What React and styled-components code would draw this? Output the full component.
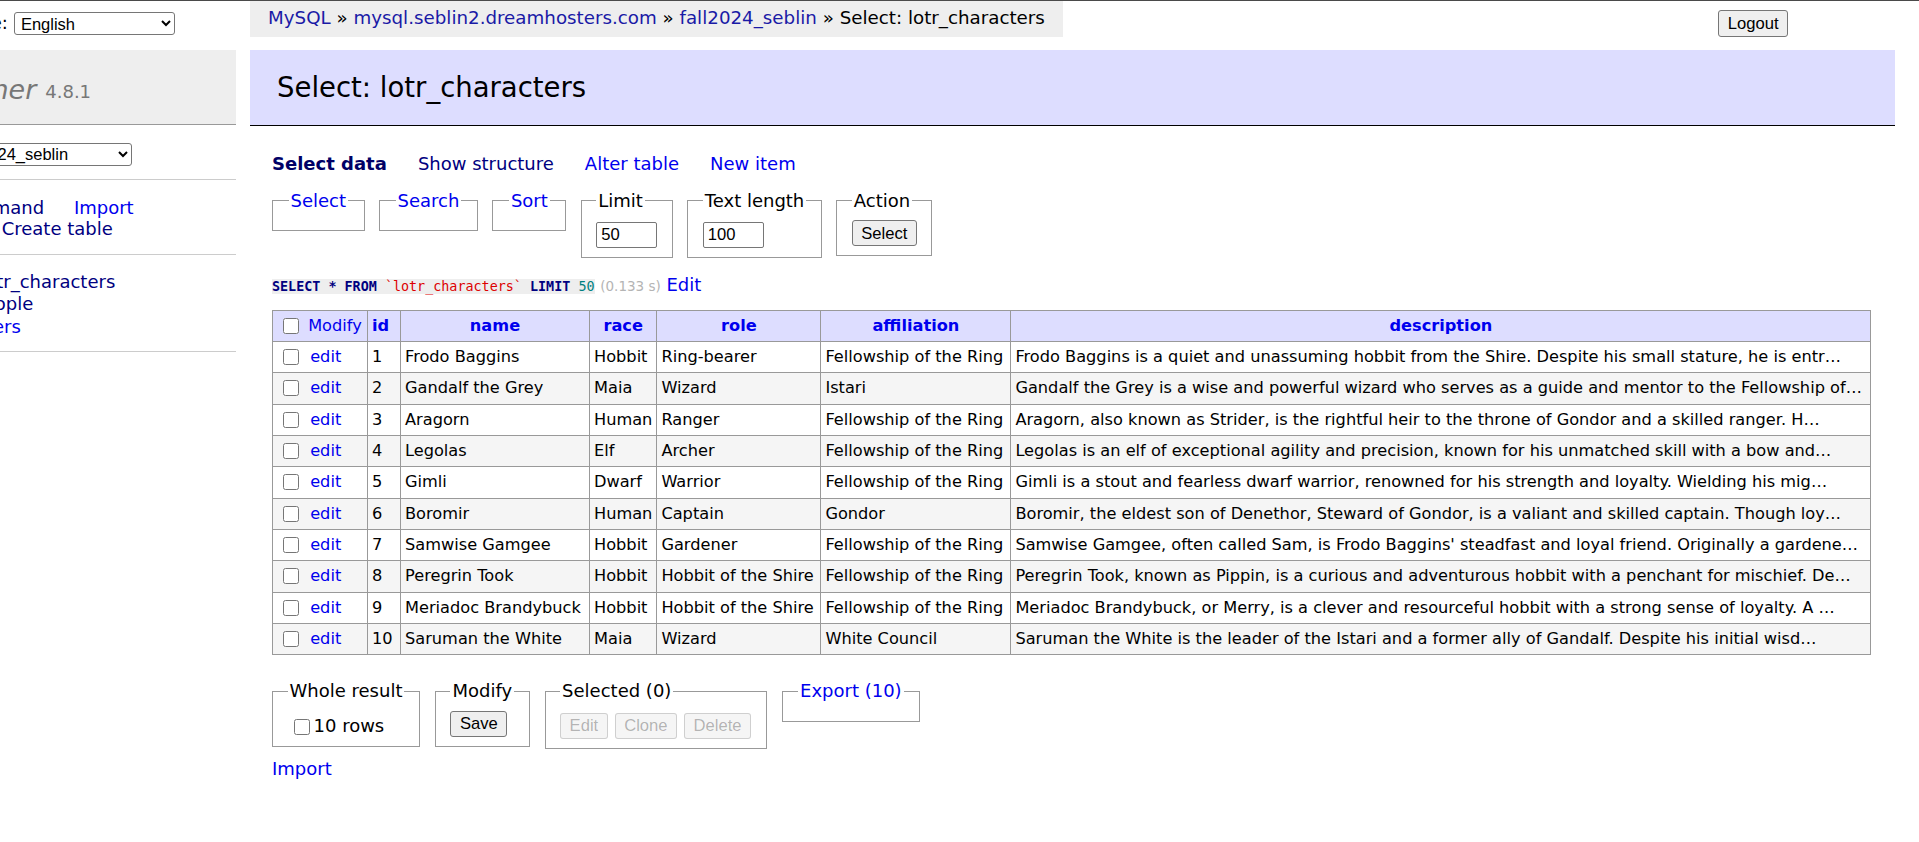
import React from 'react';
import styled, { createGlobalStyle } from 'styled-components';

const GlobalStyle = createGlobalStyle`
  html, body {
    margin: 0;
    padding: 0;
    background: #fff;
  }
  body {
    font-family: "DejaVu Sans", Verdana, sans-serif;
    font-size: 18px;
    line-height: 1.25;
    color: #000;
  }
`;

const characters = [
  { id: 1, name: 'Frodo Baggins', race: 'Hobbit', role: 'Ring-bearer', affiliation: 'Fellowship of the Ring', description: 'Frodo Baggins is a quiet and unassuming hobbit from the Shire. Despite his small stature, he is entr…' },
  { id: 2, name: 'Gandalf the Grey', race: 'Maia', role: 'Wizard', affiliation: 'Istari', description: 'Gandalf the Grey is a wise and powerful wizard who serves as a guide and mentor to the Fellowship of…' },
  { id: 3, name: 'Aragorn', race: 'Human', role: 'Ranger', affiliation: 'Fellowship of the Ring', description: 'Aragorn, also known as Strider, is the rightful heir to the throne of Gondor and a skilled ranger. H…' },
  { id: 4, name: 'Legolas', race: 'Elf', role: 'Archer', affiliation: 'Fellowship of the Ring', description: 'Legolas is an elf of exceptional agility and precision, known for his unmatched skill with a bow and…' },
  { id: 5, name: 'Gimli', race: 'Dwarf', role: 'Warrior', affiliation: 'Fellowship of the Ring', description: 'Gimli is a stout and fearless dwarf warrior, renowned for his strength and loyalty. Wielding his mig…' },
  { id: 6, name: 'Boromir', race: 'Human', role: 'Captain', affiliation: 'Gondor', description: 'Boromir, the eldest son of Denethor, Steward of Gondor, is a valiant and skilled captain. Though loy…' },
  { id: 7, name: 'Samwise Gamgee', race: 'Hobbit', role: 'Gardener', affiliation: 'Fellowship of the Ring', description: "Samwise Gamgee, often called Sam, is Frodo Baggins' steadfast and loyal friend. Originally a gardene…" },
  { id: 8, name: 'Peregrin Took', race: 'Hobbit', role: 'Hobbit of the Shire', affiliation: 'Fellowship of the Ring', description: 'Peregrin Took, known as Pippin, is a curious and adventurous hobbit with a penchant for mischief. De…' },
  { id: 9, name: 'Meriadoc Brandybuck', race: 'Hobbit', role: 'Hobbit of the Shire', affiliation: 'Fellowship of the Ring', description: 'Meriadoc Brandybuck, or Merry, is a clever and resourceful hobbit with a strong sense of loyalty. A …' },
  { id: 10, name: 'Saruman the White', race: 'Maia', role: 'Wizard', affiliation: 'White Council', description: 'Saruman the White is the leader of the Istari and a former ally of Gandalf. Despite his initial wisd…' }
];

// content widths of the columns, as the result grid in the screenshot
const columns = [
  { key: 'id', width: 24 },
  { key: 'name', width: 180 },
  { key: 'race', width: 58 },
  { key: 'role', width: 155 },
  { key: 'affiliation', width: 181 },
  { key: 'description', width: 851 }
];

const App = () => {
  return (
    <>
      <GlobalStyle />
      <Page>
        <Sidebar>
          <Menu>
            <LangBar>
              Language:
              <NativeSelect $width="161px" defaultValue="en">
                <option value="en">English</option>
              </NativeSelect>
            </LangBar>
            <Logo>
              <LogoLink href="#">Adminer</LogoLink> <Version>4.8.1</Version>
            </Logo>
            <DbBlock>
              DB:{' '}
              <NativeSelect $width="181px" defaultValue="fall2024_seblin">
                <option value="fall2024_seblin">fall2024_seblin</option>
              </NativeSelect>
            </DbBlock>
            <LinksBlock>
              <MenuLink href="#" $visited>SQL command</MenuLink> <MenuLink href="#">Import</MenuLink>
              <br />
              <MenuLink href="#" $visited>Export</MenuLink> <MenuLink href="#" $visited>Create table</MenuLink>
            </LinksBlock>
            <TableList>
              <li>
                <SelectLink href="#">select</SelectLink> <TableLink href="#" $visited $active>lotr_characters</TableLink>
              </li>
              <li>
                <SelectLink href="#">select</SelectLink> <TableLink href="#" $visited>people</TableLink>
              </li>
              <li>
                <SelectLink href="#">select</SelectLink> <TableLink href="#">users</TableLink>
              </li>
            </TableList>
          </Menu>
        </Sidebar>

        <Main>
          <TopBar>
            <Breadcrumb>
              <Crumb href="#">MySQL</Crumb> » <Crumb href="#">mysql.seblin2.dreamhosters.com</Crumb> »{' '}
              <Crumb href="#">fall2024_seblin</Crumb> » Select: lotr_characters
            </Breadcrumb>
            <LogoutButton>Logout</LogoutButton>
          </TopBar>
          <Heading>Select: lotr_characters</Heading>

          <Content>
            <Tabs>
              <Tab href="#" $current>Select data</Tab>
              <Tab href="#" $visited>Show structure</Tab>
              <Tab href="#">Alter table</Tab>
              <Tab href="#">New item</Tab>
            </Tabs>

            <FieldRow>
              <Fieldset $empty>
                <Legend><LegendLink href="#">Select</LegendLink></Legend>
              </Fieldset>
              <Fieldset $empty>
                <Legend><LegendLink href="#">Search</LegendLink></Legend>
              </Fieldset>
              <Fieldset $empty>
                <Legend><LegendLink href="#">Sort</LegendLink></Legend>
              </Fieldset>
              <Fieldset>
                <Legend>Limit</Legend>
                <SizeInput defaultValue="50" />
              </Fieldset>
              <Fieldset>
                <Legend>Text length</Legend>
                <SizeInput defaultValue="100" />
              </Fieldset>
              <Fieldset>
                <Legend>Action</Legend>
                <Button>Select</Button>
              </Fieldset>
            </FieldRow>

            <QueryLine>
              <Code>
                <Kw>SELECT</Kw> <Kw>*</Kw> <Kw>FROM</Kw> <Ident>`lotr_characters`</Ident> <Kw>LIMIT</Kw> <Num>50</Num>
              </Code>{' '}
              <Time>(0.133 s)</Time> <MenuLink href="#">Edit</MenuLink>
            </QueryLine>

            <DataTable>
              <thead>
                <tr>
                  <HeadCell $left $w={86}>
                    <Check type="checkbox" /> <HeadLink href="#">Modify</HeadLink>
                  </HeadCell>
                  {columns.map(col => (
                    <HeadCell key={col.key} $left={col.key === 'id'} $w={col.width}>
                      <HeadLink href="#" $bold>{col.key}</HeadLink>
                    </HeadCell>
                  ))}
                </tr>
              </thead>
              <tbody>
                {characters.map((row, i) => (
                  <Row key={row.id} $even={i % 2 === 1}>
                    <Cell>
                      <Check type="checkbox" /> <EditLink href="#">edit</EditLink>
                    </Cell>
                    {columns.map(col => (
                      <Cell key={col.key}>{row[col.key]}</Cell>
                    ))}
                  </Row>
                ))}
              </tbody>
            </DataTable>

            <FieldRow $bottom>
              <Fieldset>
                <Legend>Whole result</Legend>
                <RowsLabel>
                  <Check type="checkbox" />10 rows
                </RowsLabel>
              </Fieldset>
              <Fieldset>
                <Legend>Modify</Legend>
                <Button>Save</Button>
              </Fieldset>
              <Fieldset>
                <Legend>Selected (0)</Legend>
                <ButtonGroup>
                  <Button disabled>Edit</Button>
                  <Button disabled>Clone</Button>
                  <Button disabled>Delete</Button>
                </ButtonGroup>
              </Fieldset>
              <Fieldset $empty>
                <Legend><LegendLink href="#">Export (10)</LegendLink></Legend>
              </Fieldset>
            </FieldRow>

            <ImportLine>
              <MenuLink href="#">Import</MenuLink>
            </ImportLine>
          </Content>
        </Main>
      </Page>
    </>
  );
};

const Page = styled.div`
  display: flex;
  align-items: flex-start;
  border-top: 1px solid #4a4a4a;
  min-height: 841px;
`;

/* left menu is scrolled off-screen partly, like the screenshot */
const Sidebar = styled.div`
  flex: none;
  width: 236px;
  overflow: hidden;
`;

const Menu = styled.div`
  width: 341px;
  margin-left: -105px;
`;

const LangBar = styled.div`
  height: 49px;
  box-sizing: border-box;
  padding: 11px 18px 0;
  display: flex;
  align-items: flex-start;
  gap: 6px;
  white-space: nowrap;
`;

const NativeSelect = styled.select`
  width: ${p => p.$width};
  height: 23px;
  font-family: "Liberation Sans", Arial, sans-serif;
  font-size: 16.5px;
  color: #000;
  background: #fff;
  border: 1px solid #767676;
  border-radius: 3px;
  padding: 0 2px;
  vertical-align: middle;
`;

const Logo = styled.h1`
  margin: 0;
  height: 75px;
  box-sizing: border-box;
  padding: 6px 27px 0;
  display: flex;
  align-items: center;
  gap: 9px;
  background: #eee;
  border-bottom: 1px solid #999;
  font-size: 27px;
  font-weight: normal;
  color: #777;
  white-space: nowrap;
`;

const LogoLink = styled.a`
  color: #777;
  font-style: italic;
  text-decoration: none;
`;

const Version = styled.span`
  font-size: 18px;
  color: #777;
  padding-top: 4px;
`;

const MenuBlock = styled.p`
  margin: 0;
  border-bottom: 1px solid #ccc;
  white-space: nowrap;
`;

const DbBlock = styled(MenuBlock)`
  padding: 17px 18px 13px;
`;

const LinksBlock = styled(MenuBlock)`
  padding: 17px 18px 15px;
  line-height: 21px;
`;

const MenuLink = styled.a`
  color: ${p => (p.$visited ? '#000080' : '#0000ee')};
  text-decoration: none;
  margin-right: 24px;
`;

const TableList = styled.ul`
  list-style: none;
  margin: 0;
  padding: 16px 18px 12px 18px;
  border-bottom: 1px solid #ccc;
  white-space: nowrap;
  line-height: 22.8px;
`;

const SelectLink = styled.a`
  color: #0000ee;
  text-decoration: none;
`;

const TableLink = styled.a`
  color: ${p => (p.$visited ? '#000080' : '#0000ee')};
  text-decoration: none;
  margin-left: ${p => (p.$active ? '8px' : '0')};
`;

const Main = styled.div`
  flex: 1;
  min-width: 0;
  margin-left: 14px;
  padding-right: 24px;
`;

const TopBar = styled.div`
  display: flex;
  align-items: flex-start;
  height: 49px;
`;

const Breadcrumb = styled.div`
  background: #eee;
  height: 36px;
  line-height: 34px;
  padding: 0 18px;
  font-size: 18.25px;
  white-space: nowrap;
`;

const Crumb = styled.a`
  color: #1a1aa6;
  text-decoration: none;
`;

const Button = styled.button`
  font-family: "Liberation Sans", Arial, sans-serif;
  font-size: 16.6px;
  line-height: 19px;
  color: #000;
  background: #efefef;
  border: 1px solid #767676;
  border-radius: 3px;
  padding: 2px 8.5px;
  height: 26px;

  &:disabled {
    color: rgba(16, 16, 16, 0.3);
    background: rgba(239, 239, 239, 0.6);
    border-color: rgba(118, 118, 118, 0.3);
  }
`;

const LogoutButton = styled(Button)`
  margin: 9px 107px 0 auto;
  height: 27px;
`;

const Heading = styled.h2`
  margin: 0;
  height: 76px;
  box-sizing: border-box;
  padding: 0 27px;
  display: flex;
  align-items: center;
  background: #ddf;
  border-bottom: 1px solid #000;
  font-size: 27.5px;
  font-weight: normal;
  color: #000;
`;

const Content = styled.div`
  padding-left: 22px;
`;

const Tabs = styled.p`
  margin: 27px 0 0;
  display: flex;
  gap: 31px;
`;

const Tab = styled.a`
  color: ${p => (p.$current ? '#000066' : p.$visited ? '#000080' : '#0000ee')};
  font-weight: ${p => (p.$current ? 'bold' : 'normal')};
  text-decoration: none;
`;

const FieldRow = styled.div`
  display: flex;
  align-items: flex-start;
  gap: ${p => (p.$bottom ? '15px' : '14.5px')};
  margin-top: ${p => (p.$bottom ? '25px' : '14px')};
`;

const Fieldset = styled.fieldset`
  margin: 0;
  padding: 8px ${p => (p.$empty ? '15.5px' : '14.5px')} ${p => (p.$empty ? '10px' : '9px')};
  border: 1px solid #999;
  min-height: ${p => (p.$empty ? '13px' : '0')};
`;

const Legend = styled.legend`
  padding: 0 2px;
  white-space: nowrap;
`;

const LegendLink = styled.a`
  color: #0000ee;
  text-decoration: none;
`;

const SizeInput = styled.input`
  display: block;
  width: 61px;
  height: 26px;
  box-sizing: border-box;
  margin-top: 2px;
  padding: 0 4px;
  font-family: "Liberation Sans", Arial, sans-serif;
  font-size: 16.6px;
  color: #000;
  border: 1px solid #767676;
  border-radius: 2px;
`;

const QueryLine = styled.p`
  margin: 16px 0 0;
  white-space: nowrap;
`;

const Code = styled.code`
  background: #eee;
  font-family: "DejaVu Sans Mono", monospace;
  font-size: 13.4px;
`;

const Kw = styled.span`
  color: #000080;
  font-weight: bold;
`;

const Ident = styled.span`
  color: #d00;
`;

const Num = styled.span`
  color: #008080;
`;

const Time = styled.span`
  color: #b4b4b4;
  font-size: 13.5px;
`;

const DataTable = styled.table`
  margin-top: 13px;
  border-collapse: collapse;
  font-size: 16.2px;
  border: 1px solid #999;
`;

const HeadCell = styled.th`
  background: #ddf;
  border: 1px solid #999;
  width: ${p => p.$w}px;
  height: 30.35px;
  padding: 0 4px;
  text-align: ${p => (p.$left ? 'left' : 'center')};
  white-space: nowrap;
  font-weight: normal;
`;

const HeadLink = styled.a`
  color: #0000ee;
  font-weight: ${p => (p.$bold ? 'bold' : 'normal')};
  text-decoration: none;
`;

const Row = styled.tr`
  background: ${p => (p.$even ? '#f5f5f5' : '#fff')};
`;

const Cell = styled.td`
  border: 1px solid #999;
  height: 30.35px;
  padding: 0 4px;
  white-space: nowrap;
`;

const Check = styled.input`
  width: 16px;
  height: 16px;
  margin: 0 4px 0 6px;
  vertical-align: -3px;
`;

const EditLink = styled.a`
  color: #0000ee;
  text-decoration: none;
  margin-left: 2px;
`;

const RowsLabel = styled.label`
  display: block;
  margin-top: 4px;
  white-space: nowrap;
`;

const ButtonGroup = styled.div`
  display: flex;
  gap: 7px;
  margin-top: 2px;
`;

const ImportLine = styled.p`
  margin: 9px 0 0;
`;

export default App;
